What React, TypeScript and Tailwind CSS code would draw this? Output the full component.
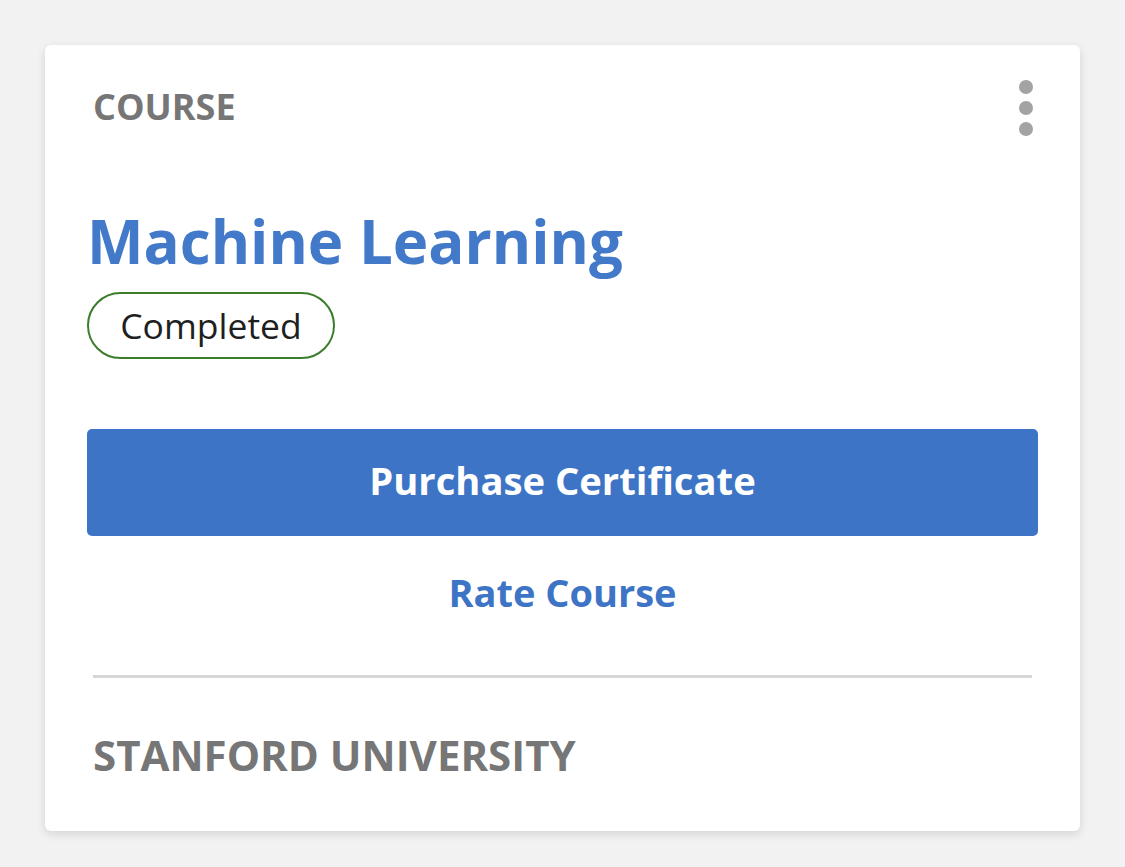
import React from "react";

export default function App() {
  return (
    <div className="min-h-[867px] w-full bg-[#f2f2f2] pt-[45px] pl-[45px]" style={{ fontFamily: '"Open Sans", sans-serif' }}>
      <div className="w-[1035px] h-[786px] bg-white rounded-[6px] shadow-[0_3px_10px_rgba(0,0,0,0.13)] px-[42px] flex flex-col">
        <div className="flex justify-between items-start pt-[35px] pl-[6px]">
          <div className="mt-[9px] text-[36px] leading-[36px] font-bold text-[#767676]">COURSE</div>
          <div className="flex flex-col gap-[7px] mr-[5px]">
            <span className="w-[14px] h-[14px] rounded-full bg-[#a3a3a3]" />
            <span className="w-[14px] h-[14px] rounded-full bg-[#a3a3a3]" />
            <span className="w-[14px] h-[14px] rounded-full bg-[#a3a3a3]" />
          </div>
        </div>
        <div className="mt-[75px] text-[60px] leading-[60px] font-bold text-[#4279c9]">Machine Learning</div>
        <div className="mt-[21px] flex">
          <div className="w-[248px] h-[67px] rounded-full border-[2.5px] border-[#3a7d2b] flex items-center justify-center text-[35.5px] text-[#1f1f1f]">
            Completed
          </div>
        </div>
        <button className="mt-[70px] h-[107px] w-full rounded-[5px] bg-[#3d74c6] text-white text-[38.2px] font-bold flex items-center justify-center pb-[3px]">
          Purchase Certificate
        </button>
        <div className="h-[113px] flex items-center justify-center text-[38px] font-bold text-[#3d74c6]">Rate Course</div>
        <div className="mt-[26px] mx-[6px] h-[3px] bg-[#d6d6d6]" />
        <div className="flex-1 flex items-center px-[6px] text-[42px] font-bold text-[#767676]">STANFORD UNIVERSITY</div>
      </div>
    </div>
  );
}
